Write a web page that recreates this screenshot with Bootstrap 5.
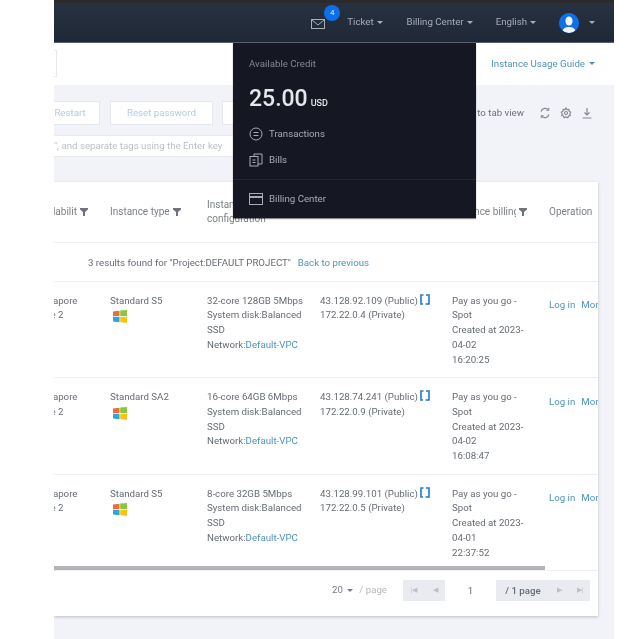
<!DOCTYPE html>
<html lang="en">
<head>
<meta charset="utf-8">
<title>Instances</title>
<link href="https://cdn.jsdelivr.net/npm/bootstrap@5.3.0/dist/css/bootstrap.min.css" rel="stylesheet">
<style>
html,body{height:100%;overflow:hidden;background:#fff}
body{font-family:Roboto,"Liberation Sans",sans-serif;font-size:9.7px;color:#666c75}
.shell{position:relative;margin-left:54px;width:560px;height:639px;overflow:hidden;background:#f2f3f8;filter:blur(.55px)}
.strip{height:3px;background:#2b2a2c}
.topbar{height:40px;padding:0 19px 0 0;background:linear-gradient(#283140,#1f2836);color:#a6adb8;border-bottom:1px solid #59606b}
.tnav{display:flex;align-items:center;gap:3px;font-size:9.7px}
.tcaret{width:0;height:0;border-left:3px solid transparent;border-right:3px solid transparent;border-top:3.5px solid currentColor;display:inline-block}
.mailwrap{position:relative;width:14px;height:12px;margin-right:19px;color:#a6adb8}
.mailbadge{position:absolute;left:13px;top:-12px;width:16px;height:16px;border-radius:50%;background:#0f6fe8;color:#dce9fb;font-size:8px;line-height:16px;text-align:center}
.gapa{margin-right:21px}.gapb{margin-right:20px}.gapc{margin-right:20px}
.avatar{width:20px;height:20px;border-radius:50%;background:#0f6fe8;overflow:hidden;display:block}
.avcaret{margin-left:7px}
.pagehead{height:42px;background:#fff;padding-right:19px}
.sliver{width:3px;height:27px;border:1px solid #e6e8ee;border-left:0;margin-top:-1px}
.guide{color:#4f93bd}
.graybody{padding-top:16px}
.toolrow{height:24px;padding-right:21px}
.lightbtn{height:24px;padding:0;background:#fff;border:1px solid #e4e7ee;border-radius:0;color:#b4cbe2;font-size:9.7px;line-height:22px}
.bw-a{width:60px;margin-left:-14px}.bw-b{width:103px;margin-left:10px}.bw-c{width:80px;margin-left:9px}
.tabview{color:#6b7079;margin-right:15px}
.icoset{gap:9px;color:#858a92}
.filterrow{height:22px;margin-top:10px;width:400px;background:#fff;border:1px solid #e8eaf0;border-left:0;color:#bcbfc6;line-height:20px;white-space:nowrap;overflow:hidden}
.tablecard{margin-top:25px;width:544px;height:434px;background:#fff;box-shadow:0 1px 3px rgba(0,0,0,.22)}
.scrollview{height:388px;overflow:hidden;position:relative}
.datatable{table-layout:fixed;width:635px;margin:0 0 0 -30px;font-size:9.7px;color:#666c75;--bs-table-bg:transparent}
.datatable th,.datatable td{border-bottom:1px solid #eeeff2;padding:0 0 0 10px;line-height:14.7px;vertical-align:top;box-shadow:none}
.datatable th{height:60px;vertical-align:middle;font-weight:400;font-size:10px;color:#7b8088;white-space:nowrap;overflow:hidden;padding-top:1px}
.datatable td.resultcell{height:39px;padding-left:64px;padding-top:3px;vertical-align:middle;white-space:nowrap}
.datatable td.rowcell{height:96.5px;padding-top:12.2px;white-space:nowrap}
.datatable td.opcell{padding-top:16.5px}
.thclip{display:inline-block;overflow:hidden;vertical-align:bottom}
.tw-a{width:43px}.tw-b{width:64px}
.funnel{display:inline-block;vertical-align:-1px;margin-left:3px}
.bluelink{color:#4f93bd;text-decoration:none}
.backlink{margin-left:2px}
.opgap{margin-left:6px}
.winlogo{display:block;margin:2px 0 0 3px}
.copyico{vertical-align:-1px;margin-left:2px}
.thumb{position:absolute;left:0;bottom:0;width:491px;height:4px;background:#b3b4b6}
.tablefoot{height:46px;border-top:1px solid #eeeff2;padding:0 8px 6px 0}
.perpage{color:#777c84;margin-right:16px}
.perpage span{color:#b4b7bd}
.pager{height:21px;background:#e9ebf0;color:#666c75}
.pagecell{width:21px;text-align:center;line-height:21px;color:#bcc0c8;font-size:7px}
.pc-a{width:22px}.pc-b{width:20px}
.pagein{width:51px;background:#fff;text-align:center;line-height:21px;color:#666c75;margin-right:1px}
.pagetotal{width:52px;text-align:center;line-height:21px;font-weight:500;color:#666c75}
.billmenu{position:absolute;left:179px;top:43px;width:243px;height:175px;background:#151823;border-radius:0;border:0;box-shadow:0 1px 1px rgba(0,0,0,.45);padding:0;margin:0;color:#a8abb3;font-size:9.7px}
.credlabel{padding:14px 16px 0;line-height:13px;color:#83868f;display:block}
.credvalue{padding:14px 16px 0;font-size:23px;font-weight:500;line-height:30px;color:#e6e7ea;display:block}
.credvalue small{font-size:9px;font-weight:500;margin-left:3px}
.billitem{display:flex;align-items:center;gap:6px;padding:0 16px;height:26px;color:#a8abb3}
.firstitem{margin-top:3px}
.billdiv{border-top:1px solid #242833;margin:6px 0 6px}
</style>
</head>
<body>
<div class="shell">
  <div class="strip"></div>
  <nav class="topbar d-flex align-items-center justify-content-end">
    <div class="tnav">
      <div class="mailwrap">
        <svg width="14" height="12" viewBox="0 0 14 12" fill="none" stroke="currentColor"><rect x=".5" y="1.500" width="13" height="9"/><path d="M1 2l6 5 6-5"/></svg>
        <span class="mailbadge">4</span>
      </div>
      <span>Ticket</span><span class="tcaret gapa"></span>
      <span>Billing Center</span><span class="tcaret gapb"></span>
      <span>English</span><span class="tcaret gapc"></span>
      <svg class="avatar" viewBox="0 0 20 20"><circle cx="10" cy="10" r="10" fill="#0f6fe8"/><ellipse cx="10" cy="8" rx="3.600" ry="4.600" fill="#f0f4fa"/><path d="M3.500 18c1-3.400 4-4 6.500-4s5.500 .6 6.500 4l-3 2h-7z" fill="#f0f4fa"/></svg>
      <span class="tcaret avcaret"></span>
    </div>
  </nav>
  <div class="pagehead d-flex align-items-center justify-content-between">
    <div class="sliver"></div>
    <div class="guide d-flex align-items-center gap-1"><span>Instance Usage Guide</span><span class="tcaret"></span></div>
  </div>
  <div class="graybody">
    <div class="toolrow d-flex align-items-center">
      <button class="btn lightbtn bw-a" type="button">Restart</button>
      <button class="btn lightbtn bw-b" type="button">Reset password</button>
      <button class="btn lightbtn bw-c" type="button">More</button>
      <div class="ms-auto d-flex align-items-center">
        <span class="tabview">Switch to tab view</span>
        <div class="d-flex align-items-center icoset">
          <svg width="12" height="12" viewBox="0 0 12 12" fill="none" stroke="currentColor" stroke-width="1.200"><path d="M2 4.500A4.300 4.300 0 0 1 9.500 3M10 7.500A4.300 4.300 0 0 1 2.500 9"/><path d="M9.800 .8v2.500H7.300M2.200 11.200V8.700h2.500" stroke-width="1"/></svg>
          <svg width="12" height="12" viewBox="0 0 12 12" fill="none" stroke="currentColor" stroke-width="1.200"><path d="M6 1l1 1.600 1.800-.2.300 1.800 1.600 1L9.800 6.800l.5 1.800-1.800.4-.7 1.700L6 10l-1.800.7-.7-1.700-1.800-.4.500-1.800L1.300 5.200l1.600-1 .3-1.800 1.800.2z"/><circle cx="6" cy="6" r="1.500"/></svg>
          <svg width="12" height="12" viewBox="0 0 12 12" fill="none" stroke="currentColor" stroke-width="1.200"><path d="M6 1v7M3.500 5.500L6 8l2.500-2.500M1.500 11h9"/></svg>
        </div>
      </div>
    </div>
    <div class="filterrow">", and separate tags using the Enter key</div>
    <div class="tablecard">
      <div class="scrollview">
        <table class="table datatable">
          <colgroup><col style="width:76px"><col style="width:97px"><col style="width:113px"><col style="width:132px"><col style="width:97px"><col style="width:120px"></colgroup>
          <thead>
            <tr>
              <th><span class="thclip tw-a">Availability</span><svg class="funnel" width="8" height="8" viewBox="0 0 8 8" fill="#6f747c"><path d="M0 0h8v1.500L5 4v4H3V4L0 1.500z"/></svg></th>
              <th>Instance type<svg class="funnel" width="8" height="8" viewBox="0 0 8 8" fill="#6f747c"><path d="M0 0h8v1.500L5 4v4H3V4L0 1.500z"/></svg></th>
              <th>Instance<br>configuration</th>
              <th>IP address</th>
              <th><span class="thclip tw-b">Instance billing</span><svg class="funnel" width="8" height="8" viewBox="0 0 8 8" fill="#6f747c"><path d="M0 0h8v1.500L5 4v4H3V4L0 1.500z"/></svg></th>
              <th>Operation</th>
            </tr>
          </thead>
          <tbody>
            <tr><td class="resultcell" colspan="6">3 results found for "Project:DEFAULT PROJECT" &nbsp;<a class="bluelink backlink" href="#">Back to previous</a></td></tr>
            <tr>
              <td class="rowcell">Singapore<br>Zone 2</td>
              <td class="rowcell">Standard S5<svg class="winlogo" width="14" height="13" viewBox="0 0 14 13"><path fill="#ef6b3a" d="M0 1.500l6.500-.8v5.300H0z"/><path fill="#8cc63f" d="M7.200 .6L14 0v6H7.200z"/><path fill="#29a8e0" d="M0 6.800h6.500v5.400L0 11.400z"/><path fill="#fcc419" d="M7.200 6.800H14V13l-6.800-.8z"/></svg></td>
              <td class="rowcell">32-core 128GB 5Mbps<br>System disk:Balanced<br>SSD<br>Network:<a class="bluelink" href="#">Default-VPC</a></td>
              <td class="rowcell">43.128.92.109 (Public)<svg class="copyico" width="10" height="11" viewBox="0 0 10 11" fill="none" stroke="#1f78d1" stroke-width="1.600"><path d="M3.500 1H1v9h2M6 1h3v9H5.500"/></svg><br>172.22.0.4 (Private)</td>
              <td class="rowcell">Pay as you go -<br>Spot<br>Created at 2023-<br>04-02<br>16:20:25</td>
              <td class="rowcell opcell"><a class="bluelink" href="#">Log in</a><a class="bluelink opgap" href="#">More</a></td>
            </tr>
            <tr>
              <td class="rowcell">Singapore<br>Zone 2</td>
              <td class="rowcell">Standard SA2<svg class="winlogo" width="14" height="13" viewBox="0 0 14 13"><path fill="#ef6b3a" d="M0 1.500l6.500-.8v5.300H0z"/><path fill="#8cc63f" d="M7.200 .6L14 0v6H7.200z"/><path fill="#29a8e0" d="M0 6.800h6.500v5.400L0 11.400z"/><path fill="#fcc419" d="M7.200 6.800H14V13l-6.800-.8z"/></svg></td>
              <td class="rowcell">16-core 64GB 6Mbps<br>System disk:Balanced<br>SSD<br>Network:<a class="bluelink" href="#">Default-VPC</a></td>
              <td class="rowcell">43.128.74.241 (Public)<svg class="copyico" width="10" height="11" viewBox="0 0 10 11" fill="none" stroke="#1f78d1" stroke-width="1.600"><path d="M3.500 1H1v9h2M6 1h3v9H5.500"/></svg><br>172.22.0.9 (Private)</td>
              <td class="rowcell">Pay as you go -<br>Spot<br>Created at 2023-<br>04-02<br>16:08:47</td>
              <td class="rowcell opcell"><a class="bluelink" href="#">Log in</a><a class="bluelink opgap" href="#">More</a></td>
            </tr>
            <tr>
              <td class="rowcell">Singapore<br>Zone 2</td>
              <td class="rowcell">Standard S5<svg class="winlogo" width="14" height="13" viewBox="0 0 14 13"><path fill="#ef6b3a" d="M0 1.500l6.500-.8v5.300H0z"/><path fill="#8cc63f" d="M7.200 .6L14 0v6H7.200z"/><path fill="#29a8e0" d="M0 6.800h6.500v5.400L0 11.400z"/><path fill="#fcc419" d="M7.200 6.800H14V13l-6.800-.8z"/></svg></td>
              <td class="rowcell">8-core 32GB 5Mbps<br>System disk:Balanced<br>SSD<br>Network:<a class="bluelink" href="#">Default-VPC</a></td>
              <td class="rowcell">43.128.99.101 (Public)<svg class="copyico" width="10" height="11" viewBox="0 0 10 11" fill="none" stroke="#1f78d1" stroke-width="1.600"><path d="M3.500 1H1v9h2M6 1h3v9H5.500"/></svg><br>172.22.0.5 (Private)</td>
              <td class="rowcell">Pay as you go -<br>Spot<br>Created at 2023-<br>04-01<br>22:37:52</td>
              <td class="rowcell opcell"><a class="bluelink" href="#">Log in</a><a class="bluelink opgap" href="#">More</a></td>
            </tr>
          </tbody>
        </table>
        <div class="thumb"></div>
      </div>
      <div class="tablefoot d-flex align-items-center justify-content-end">
        <div class="perpage d-flex align-items-center gap-1">20 <i class="tcaret"></i> <span>&nbsp;/ page</span></div>
        <div class="pager d-flex">
          <div class="pagecell pc-a">|◀</div><div class="pagecell pc-b">◀</div>
          <div class="pagein">1</div>
          <div class="pagetotal">/ 1 page</div>
          <div class="pagecell">▶</div><div class="pagecell pc-b">▶|</div>
        </div>
      </div>
    </div>
  </div>
  <div class="dropdown-menu show billmenu">
    <span class="credlabel">Available Credit</span>
    <span class="credvalue">25.00<small>USD</small></span>
    <div class="billitem firstitem">
      <svg width="14" height="14" viewBox="0 0 14 14" fill="none" stroke="currentColor"><circle cx="7" cy="7" r="6"/><path d="M4.500 5.500h5M4.500 8.500h5"/></svg><span>Transactions</span>
    </div>
    <div class="billitem">
      <svg width="14" height="14" viewBox="0 0 14 14" fill="none" stroke="currentColor"><rect x="1" y="3.500" width="8" height="9.500"/><path d="M5 3.500V1h8v10h-4M3.500 7h3M3.500 9.500h3"/></svg><span>Bills</span>
    </div>
    <div class="billdiv"></div>
    <div class="billitem">
      <svg width="14" height="12" viewBox="0 0 14 12" fill="none" stroke="currentColor"><rect x=".5" y=".5" width="13" height="11"/><path d="M.5 4h13" stroke-width="2"/></svg><span>Billing Center</span>
    </div>
  </div>
</div>
<script src="https://cdn.jsdelivr.net/npm/bootstrap@5.3.0/dist/js/bootstrap.bundle.min.js"></script>
</body>
</html>
